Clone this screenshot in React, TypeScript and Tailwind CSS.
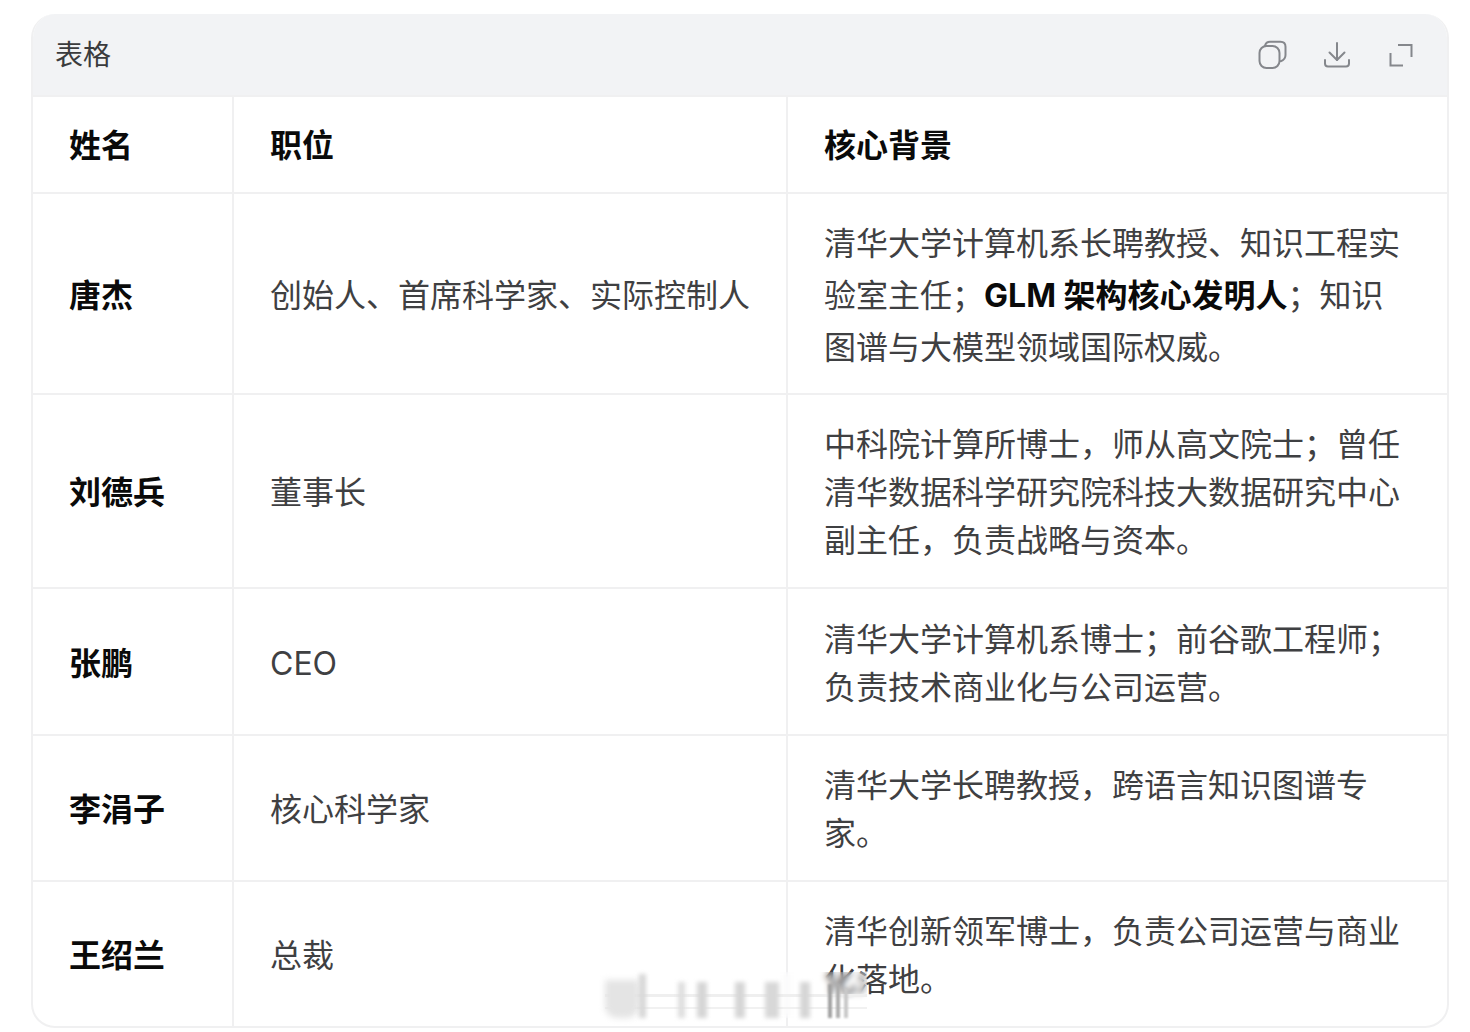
const FONT = "font-['Inter','Noto_Sans_CJK_SC',sans-serif]";

type Row = {
  name: string;
  title: string;
  bg: React.ReactNode;
  rowClass: string;
  leading: string;
};

const rows: Row[] = [
  {
    name: '唐杰',
    title: '创始人、首席科学家、实际控制人',
    bg: (
      <>
        清华大学计算机系长聘教授、知识工程实验室主任；
        <strong className="font-bold text-[#0a0a0a]">GLM 架构核心发明人</strong>
        ；知识图谱与大模型领域国际权威。
      </>
    ),
    rowClass: 'h-[201px]',
    leading: 'leading-[52px]',
  },
  {
    name: '刘德兵',
    title: '董事长',
    bg: '中科院计算所博士，师从高文院士；曾任清华数据科学研究院科技大数据研究中心副主任，负责战略与资本。',
    rowClass: 'h-[194px]',
    leading: 'leading-[48px]',
  },
  {
    name: '张鹏',
    title: 'CEO',
    bg: '清华大学计算机系博士；前谷歌工程师；负责技术商业化与公司运营。',
    rowClass: 'h-[147px]',
    leading: 'leading-[48px]',
  },
  {
    name: '李涓子',
    title: '核心科学家',
    bg: '清华大学长聘教授，跨语言知识图谱专家。',
    rowClass: 'h-[146px]',
    leading: 'leading-[48px]',
  },
  {
    name: '王绍兰',
    title: '总裁',
    bg: '清华创新领军博士，负责公司运营与商业化落地。',
    rowClass: 'h-[146px]',
    leading: 'leading-[48px]',
  },
];

function CopyIcon() {
  return (
    <svg width="30" height="30" viewBox="0 0 30 30" fill="none" stroke="#85878c" strokeWidth="2">
      <rect x="1.5" y="6" width="20" height="22" rx="7" />
      <path d="M7 5.500C7.800 3 9.500 1.800 12 1.800h10.500c3 0 5 2 5 5V15c0 3-1.200 5-4.800 6.200" strokeLinecap="round" />
    </svg>
  );
}

function DownloadIcon() {
  return (
    <svg width="28" height="28" viewBox="0 0 28 28" fill="none" stroke="#85878c" strokeWidth="2" strokeLinecap="round" strokeLinejoin="round">
      <path d="M14 2v17" />
      <path d="M6.500 11.500 14 19l7.500-7.500" />
      <path d="M2 19v3.500a3 3 0 0 0 3 3h18a3 3 0 0 0 3-3V19" />
    </svg>
  );
}

function ExpandIcon() {
  return (
    <svg className="ml-[3px]" width="24" height="24" viewBox="0 0 24 24" fill="none" stroke="#85878c" strokeWidth="2" strokeLinecap="square">
      <path d="M10 2h12.500v11" />
      <path d="M1.500 11v11.500H13" />
    </svg>
  );
}

// smeared watermark over the bottom of the card, one overlay with its bars in flow
function Watermark() {
  return (
    <div className="absolute left-[605px] top-[972px] flex h-[46px] w-[262px] items-end bg-[linear-gradient(to_bottom,transparent_48%,#efefef_48%,#efefef_54%,transparent_54%,transparent_76%,#f1f1f1_76%,#f1f1f1_80%,transparent_80%)] backdrop-blur-[3px]">
      <span className="h-[38px] w-[34px] rounded-b-[12px] bg-[#e4e4e4] blur-[3px]" />
      <span className="h-[44px] w-[7px] bg-[#d6d6d6] blur-[2px]" />
      <span className="ml-[32px] h-[36px] w-[7px] bg-[#dedede] blur-[2px]" />
      <span className="ml-[12px] h-[36px] w-[10px] bg-[#d6d6d6] blur-[2px]" />
      <span className="ml-[28px] h-[36px] w-[10px] bg-[#d6d6d6] blur-[2px]" />
      <span className="ml-[20px] h-[36px] w-[14px] bg-[#d8d8d8] blur-[2px]" />
      <span className="ml-[21px] h-[36px] w-[10px] bg-[#d6d6d6] blur-[2px]" />
      <span className="ml-[18px] h-[34px] w-[4px] bg-[#a0a0a0] blur-[1px]" />
      <span className="ml-[4px] h-[34px] w-[4px] bg-[#acacac] blur-[1px]" />
      <span className="ml-[4px] h-[30px] w-[4px] bg-[#c8c8c8] blur-[1px]" />
    </div>
  );
}

export default function App() {
  return (
    <div className={`relative h-[1032px] w-[1470px] overflow-hidden bg-white pl-[31px] pt-[14px] ${FONT}`}>
      <div className="h-[1014px] w-[1418px] overflow-hidden rounded-[24px] border-2 border-t-0 border-[#f0f0f1]">
        <div className="flex h-[81px] items-center justify-between bg-[#f2f3f5] pl-[22px] pr-[34px]">
          <span className="text-[28px] leading-none text-[#3a3b3d]">表格</span>
          <div className="flex items-center gap-[35px]">
            <CopyIcon />
            <DownloadIcon />
            <ExpandIcon />
          </div>
        </div>
        <table className="w-full table-fixed border-collapse text-left text-[32px]">
          <colgroup>
            <col className="w-[200px]" />
            <col className="w-[554px]" />
            <col />
          </colgroup>
          <thead>
            <tr className="h-[97px] border-y-2 border-[#f0f0f1]">
              <th className="pl-[36px] pt-[2px] font-bold text-[#0a0a0a]">姓名</th>
              <th className="border-l-2 border-[#f0f0f1] pl-[36px] pt-[2px] font-bold text-[#0a0a0a]">职位</th>
              <th className="border-l-2 border-[#f0f0f1] pl-[36px] pt-[2px] font-bold text-[#0a0a0a]">核心背景</th>
            </tr>
          </thead>
          <tbody>
            {rows.map((r) => (
              <tr key={r.name} className={`border-b-2 border-[#f0f0f1] ${r.rowClass}`}>
                <td className="pl-[36px] pt-[4px] font-bold text-[#0a0a0a]">{r.name}</td>
                <td className="border-l-2 border-[#f0f0f1] pl-[36px] pt-[4px] text-[#3f4042]">{r.title}</td>
                <td className={`border-l-2 border-[#f0f0f1] pl-[36px] pr-[40px] pt-[4px] text-[#3f4042] ${r.leading}`}>{r.bg}</td>
              </tr>
            ))}
          </tbody>
        </table>
      </div>
      <Watermark />
    </div>
  );
}
